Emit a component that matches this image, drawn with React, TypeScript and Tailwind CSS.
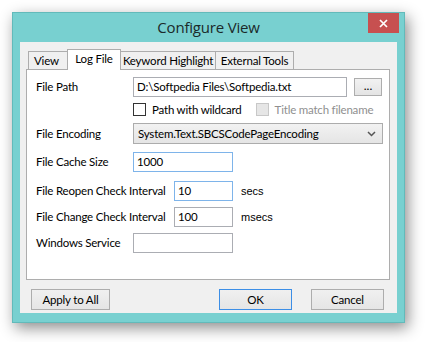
import React from "react";

const body = { fontFamily: 'Lato, "Open Sans", sans-serif' };
const titleFont = { fontFamily: '"Open Sans", "Noto Sans", sans-serif' };
const T = "text-[11.5px] tracking-[-0.2px]";

function Label({ w, children }: { w: number; children: React.ReactNode }) {
  return (
    <div className="shrink-0 whitespace-nowrap text-[11.5px] tracking-[-0.2px] text-black leading-none" style={{ width: w }}>
      {children}
    </div>
  );
}

export default function App() {
  return (
    <div className="w-[425px] h-[342px] bg-white overflow-hidden pt-[12px] pl-[12px] whitespace-nowrap text-black" style={body}>
      <div className="w-[393px] h-[311px] bg-[#78d0d0] border border-[#62baba] shadow-[3px_5px_14px_rgba(0,0,0,0.45)] flex flex-col">
        {/* title bar */}
        <div className="h-[29px] relative flex items-center justify-center">
          <span className="text-[15px] text-[#1b2a2a] tracking-[-0.2px] mt-[-1px]" style={titleFont}>Configure View</span>
          <div className="absolute right-[5px] top-0 w-[31px] h-[20px] bg-[#c75050] flex items-center justify-center">
            <svg width="9" height="9" viewBox="0 0 9 9">
              <path d="M1 1 L8 8 M8 1 L1 8" stroke="white" strokeWidth="1.7" />
            </svg>
          </div>
        </div>
        {/* client */}
        <div className="mx-[7px] h-[271px] bg-[#f0f0f0] flex flex-col">
          <div className="pl-[6px] pt-[7px]">
            {/* tab strip */}
            <div className="flex items-end h-[20px] pl-[2px] text-[11.5px] tracking-[-0.2px] text-black leading-none relative z-10">
              <div className="h-[18px] w-[40px] border border-b-0 border-[#adadad] bg-[#f0f0f0] flex items-center pl-[5px]">View</div>
              <div className="h-[21px] w-[54px] border border-b-0 border-[#adadad] bg-white flex items-center justify-center -mb-[1px] -mx-[1px] relative z-10 pb-[2px]">Log File</div>
              <div className="h-[18px] w-[96px] border border-b-0 border-[#adadad] bg-[#f0f0f0] flex items-center justify-center">Keyword Highlight</div>
              <div className="h-[18px] w-[78px] border border-b-0 border-l-0 border-[#adadad] bg-[#f0f0f0] flex items-center justify-center">External Tools</div>
            </div>
            {/* tab page */}
            <div className="w-[364px] h-[211px] bg-white border border-[#adadad] pt-[7px] pl-[9px] flex flex-col">
              <div className="flex items-center h-[20px]">
                <Label w={97}>File Path</Label>
                <div className={`w-[214px] h-[20px] border border-[#abadb3] flex items-center pl-[3px] ${T} leading-none`}>
                  D:\Softpedia Files\Softpedia.txt
                </div>
                <div className="ml-[7px] w-[28px] h-[18px] border border-[#adadad] bg-gradient-to-b from-[#f2f2f2] to-[#e4e4e4] flex items-center justify-center text-[12px] leading-none pb-[3px]">
                  ...
                </div>
              </div>
              <div className={`flex items-center h-[13px] mt-[6px] ${T} leading-none`}>
                <div className="w-[97px]" />
                <div className="w-[13px] h-[13px] border border-[#333] bg-white" />
                <span className="ml-[6px]">Path with wildcard</span>
                <div className="ml-[14px] w-[13px] h-[13px] border border-[#c8c8c8] bg-[#e6e6e6]" />
                <span className="ml-[6px] text-[#8f8f8f]">Title match filename</span>
              </div>
              <div className="flex items-center h-[21px] mt-[7px]">
                <Label w={97}>File Encoding</Label>
                <div className={`w-[250px] h-[21px] border border-[#acacac] bg-gradient-to-b from-[#f2f2f2] to-[#e5e5e5] flex items-center pl-[4px] pr-[6px] ${T} leading-none`}>
                  <span className="flex-1">System.Text.SBCSCodePageEncoding</span>
                  <svg width="9" height="6" viewBox="0 0 9 6">
                    <path d="M1 1 L4.5 4.5 L8 1" stroke="#555" strokeWidth="1.5" fill="none" />
                  </svg>
                </div>
              </div>
              <div className="flex items-center h-[20px] mt-[8px]">
                <Label w={97}>File Cache Size</Label>
                <div className={`w-[100px] h-[20px] border border-[#7eb4ea] flex items-center pl-[3px] ${T} leading-none`}>1000</div>
              </div>
              <div className="flex items-center h-[20px] mt-[9px]">
                <Label w={138}>File Reopen Check Interval</Label>
                <div className={`w-[59px] h-[20px] border border-[#7eb4ea] flex items-center pl-[3px] ${T} leading-none`}>10</div>
                <span className="ml-[8px] leading-none" style={{ fontFamily: '"Liberation Sans", Arial, sans-serif', fontSize: 11 }}>secs</span>
              </div>
              <div className="flex items-center h-[20px] mt-[6px]">
                <Label w={138}>File Change Check Interval</Label>
                <div className={`w-[59px] h-[20px] border border-[#abadb3] flex items-center pl-[3px] ${T} leading-none`}>100</div>
                <span className="ml-[8px] leading-none" style={{ fontFamily: '"Liberation Sans", Arial, sans-serif', fontSize: 11 }}>msecs</span>
              </div>
              <div className="flex items-center h-[20px] mt-[6px]">
                <Label w={97}>Windows Service</Label>
                <div className="w-[100px] h-[20px] border border-[#abadb3]" />
              </div>
            </div>
          </div>
          {/* buttons */}
          <div className={`flex items-center mt-[9px] pl-[11px] pr-[13px] ${T} leading-none`}>
            <div className="w-[79px] h-[21px] border border-[#adadad] bg-gradient-to-b from-[#f0f0f0] to-[#e5e5e5] flex items-center justify-center">Apply to All</div>
            <div className="flex-1" />
            <div className="w-[73px] h-[21px] border border-[#3c8ee6] bg-gradient-to-b from-[#f0f0f0] to-[#e5e5e5] flex items-center justify-center">OK</div>
            <div className="w-[73px] h-[21px] ml-[19px] border border-[#adadad] bg-gradient-to-b from-[#f0f0f0] to-[#e5e5e5] flex items-center justify-center">Cancel</div>
          </div>
        </div>
      </div>
    </div>
  );
}
